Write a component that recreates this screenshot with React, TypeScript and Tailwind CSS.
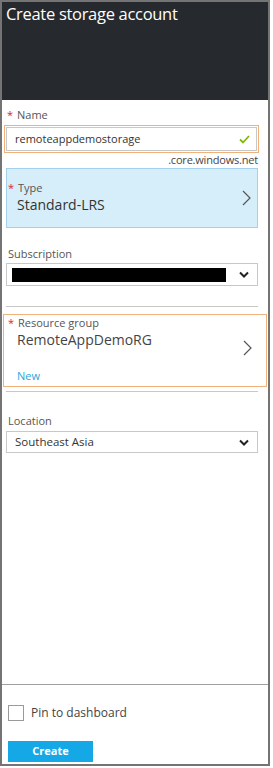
import React from 'react'

const font = { fontFamily: '"Open Sans", "Noto Sans", Arial, sans-serif' }

function Asterisk() {
  return <span className="text-[#d9262e] text-[11px] w-[11px] inline-block pl-[1px]">*</span>
}

function ChevronRight() {
  return (
    <svg width="9" height="16" viewBox="0 0 9 16" fill="none">
      <path d="M1 1 L8 8 L1 15" stroke="#555" strokeWidth="1.2" />
    </svg>
  )
}

function ChevronDown() {
  return (
    <svg width="10" height="7" viewBox="0 0 10 7" fill="none">
      <path d="M1 1.5 L5 5.5 L9 1.5" stroke="#222" strokeWidth="2" />
    </svg>
  )
}

function Check() {
  return (
    <svg width="11" height="9" viewBox="0 0 11 9" fill="none">
      <path d="M1 4.5 L4 7.5 L10 1" stroke="#7fba00" strokeWidth="1.8" />
    </svg>
  )
}

export default function App() {
  return (
    <div className="w-[273px] h-[768px] bg-white" style={font}>
      <div className="w-[270px] h-[766px] border-2 border-[#747474] flex flex-col">
        {/* Header */}
        <div className="h-[98px] bg-[#262a2f] px-[4px] pt-[1px]">
          <h1 className="text-white text-[16.5px] leading-[22px] tracking-[-0.3px]">Create storage account</h1>
        </div>

        {/* Body */}
        <div className="flex-1 flex flex-col pl-[4px] pr-[10px] pt-[8px]">
          <div className="h-[14px] text-[11px] leading-[14px] text-[#555] flex">
            <Asterisk />
            <span>Name</span>
          </div>

          <div className="mt-[3px] -ml-[2px] -mr-[1px] h-[28px] border border-[#f0b27a] p-[1px]">
            <div className="h-[24px] border border-[#c8c8c8] flex items-center justify-between pl-[8px] pr-[6px]">
              <span className="text-[11px] text-[#333]">remoteappdemostorage</span>
              <Check />
            </div>
          </div>

          <div className="h-[15px] text-right text-[11px] leading-[14px] text-[#444] tracking-[-0.2px]">.core.windows.net</div>

          <div className="h-[60px] bg-[#d6eefa] border border-[#a3d0ec] flex items-center justify-between pr-[6px]">
            <div className="flex flex-col">
              <div className="text-[11px] leading-[14px] text-[#555] flex">
                <Asterisk />
                <span>Type</span>
              </div>
              <div className="text-[14px] leading-[20px] text-[#333] pl-[10px]">Standard-LRS</div>
            </div>
            <ChevronRight />
          </div>

          <div className="mt-[19px] h-[14px] text-[11px] leading-[14px] text-[#555] pl-[2px]">Subscription</div>
          <div className="mt-[2px] h-[23px] border border-[#c8c8c8] flex items-center justify-between pl-[5px] pr-[8px]">
            <div className="w-[214px] h-[14px] bg-black" />
            <ChevronDown />
          </div>

          <div className="mt-[20px] h-px bg-[#c8c8c8]" />

          <div className="mt-[7px] -ml-[3px] -mr-[9px] h-[73px] border border-[#f0b27a] flex items-start justify-between pr-[14px]">
            <div className="flex flex-col pt-[1px]">
              <div className="text-[11px] leading-[14px] text-[#555] flex pl-[3px]">
                <Asterisk />
                <span>Resource group</span>
              </div>
              <div className="text-[14px] leading-[20px] text-[#444] pl-[13px]">RemoteAppDemoRG</div>
              <div className="mt-[19px] text-[11px] leading-[14px] text-[#29a7dc] pl-[13px]">New</div>
            </div>
            <div className="mt-[25px]">
              <ChevronRight />
            </div>
          </div>

          <div className="mt-[4px] h-px bg-[#c8c8c8]" />

          <div className="mt-[22px] h-[14px] text-[11px] leading-[14px] text-[#555] pl-[2px]">Location</div>
          <div className="mt-[3px] h-[22px] border border-[#c8c8c8] flex items-center justify-between pl-[8px] pr-[8px]">
            <span className="text-[11.5px] text-[#333]">Southeast Asia</span>
            <ChevronDown />
          </div>
        </div>

        {/* Footer */}
        <div className="h-[80px] border-t border-[#a0a0a0] pt-[20px] pl-[6px] flex flex-col">
          <label className="flex items-center gap-[7px] h-[16px]">
            <span className="w-[16px] h-[16px] border border-[#9a9a9a] bg-white" />
            <span className="text-[12px] text-[#444]">Pin to dashboard</span>
          </label>
          <button className="mt-[20px] w-[85px] h-[21px] bg-[#14a9e6] text-white text-[11px] font-bold">Create</button>
        </div>
      </div>
    </div>
  )
}
